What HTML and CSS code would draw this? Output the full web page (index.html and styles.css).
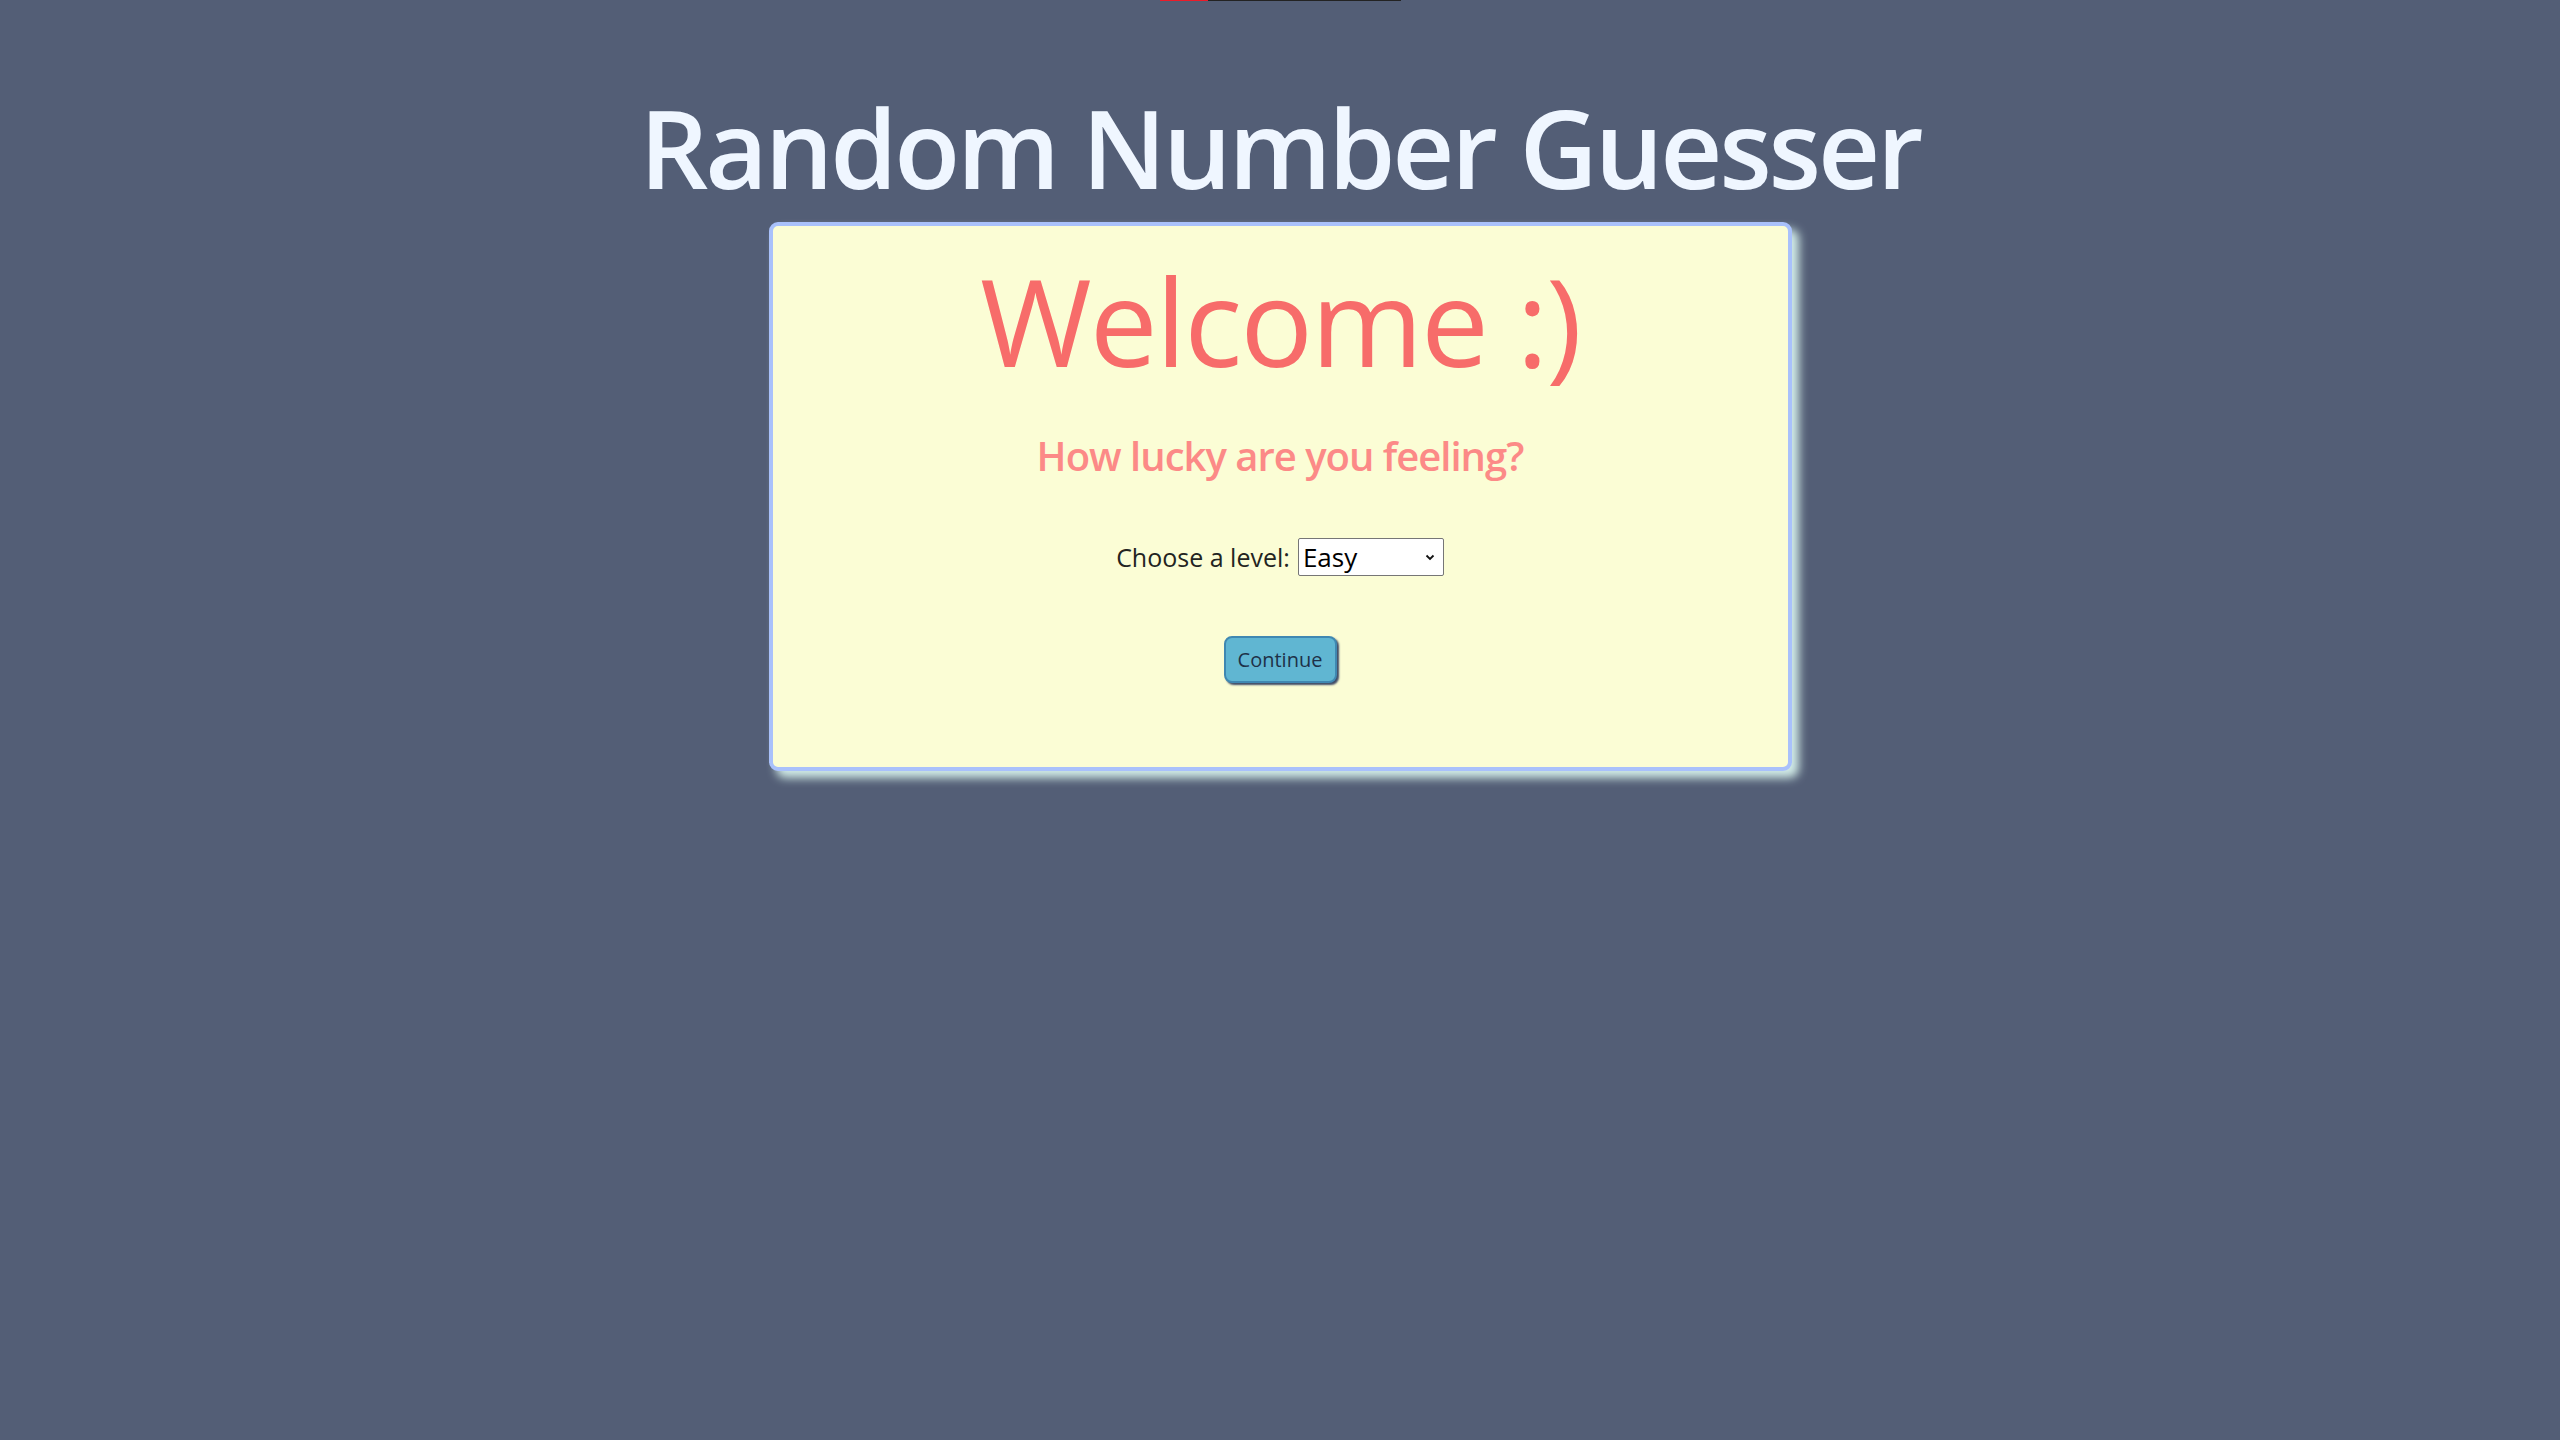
FILE: index.html
```html
<!DOCTYPE html>
<html lang="en">
<head>
<meta charset="utf-8">
<title>Random Number Guesser</title>
<link rel="stylesheet" href="styles.css">
</head>
<body>
<div class="topbar"><div class="topbar-fill"></div></div>
<h1 class="title">Random Number Guesser</h1>
<main class="card">
  <h2 class="welcome">Welcome :)</h2>
  <p class="subtitle">How lucky are you feeling?</p>
  <div class="level-row">
    <label class="level-label" for="level">Choose a level:</label>
    <div class="select">
      <span class="select-value">Easy</span>
      <svg class="chev" width="10" height="7" viewBox="0 0 10 7"><path d="M1.5 1.5 L5 5 L8.5 1.5" fill="none" stroke="#111" stroke-width="1.8"/></svg>
    </div>
  </div>
  <button class="continue" type="button">Continue</button>
</main>
</body>
</html>
```
FILE: styles.css
```css
html, body {
  margin: 0;
  padding: 0;
}
body {
  background: #535e76;
  font-family: "Open Sans", "Noto Sans", sans-serif;
  min-height: 1440px;
  display: flex;
  flex-direction: column;
  align-items: center;
}
.topbar {
  width: 241px;
  height: 1px;
  background: #232323;
  display: flex;
}
.topbar-fill {
  width: 48px;
  background: #ec1c2a;
}
.title {
  margin: 81px 0 8px;
  font-size: 108px;
  line-height: 132px;
  font-weight: 600;
  color: #eff6ff;
  letter-spacing: -3.2px;
  white-space: nowrap;
}
.card {
  box-sizing: border-box;
  width: 1023px;
  height: 549px;
  background: #fbfdd5;
  border: 4px solid #a9c1fb;
  border-radius: 9px;
  box-shadow: 7px 7px 10px #d2ece8;
  display: flex;
  flex-direction: column;
  align-items: center;
  padding-top: 22px;
}
.welcome {
  margin: 0;
  font-size: 121px;
  line-height: 145px;
  font-weight: 400;
  color: #f76c6a;
  letter-spacing: -2px;
}
.subtitle {
  margin: 38px 0 0;
  font-size: 40px;
  line-height: 49px;
  font-weight: 600;
  color: #fc8a87;
  letter-spacing: -1px;
}
.level-row {
  margin-top: 58px;
  display: flex;
  align-items: center;
  gap: 8px;
}
.level-label {
  font-size: 25px;
  color: #23241f;
}
.select {
  box-sizing: border-box;
  width: 146px;
  height: 38px;
  background: #fff;
  border: 1px solid #767676;
  border-radius: 2px;
  display: flex;
  align-items: center;
  justify-content: space-between;
  padding: 0 8px 0 4px;
}
.select-value {
  font-size: 26px;
  color: #000;
}
.continue {
  margin-top: 60px;
  box-sizing: border-box;
  width: 113px;
  height: 47px;
  background: #60b6d2;
  border: 2px solid #3f88b2;
  border-radius: 8px;
  box-shadow: 2px 2px 2px #3e4a66;
  font-family: "Open Sans", "Noto Sans", sans-serif;
  font-size: 20px;
  color: #1e3148;
  padding: 0;
}
```
